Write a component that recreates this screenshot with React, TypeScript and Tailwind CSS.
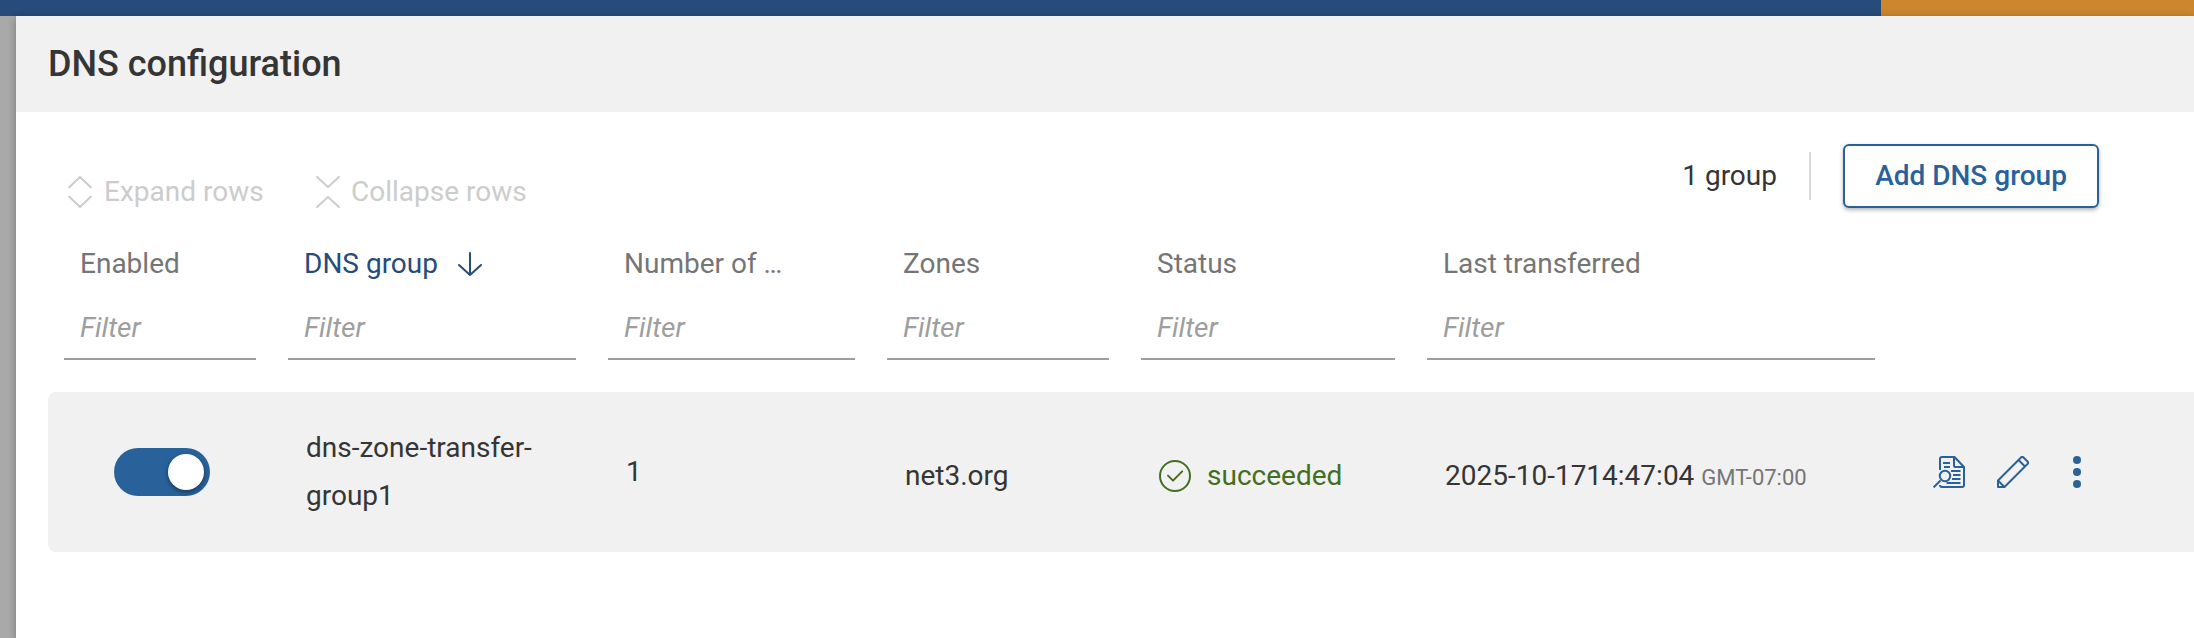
import React from "react";

type Column = { label: string; className: string; sorted?: boolean };

const columns: Column[] = [
  { label: "Enabled", className: "w-48" },
  { label: "DNS group", className: "w-72", sorted: true },
  { label: "Number of …", className: "w-[247px]" },
  { label: "Zones", className: "w-[222px]" },
  { label: "Status", className: "w-[254px]" },
  { label: "Last transferred", className: "w-[448px]" },
];

function ExpandIcon() {
  return (
    <svg className="h-8 w-6" viewBox="0 0 24 32" fill="none" stroke="currentColor" strokeWidth="2" strokeLinecap="round" strokeLinejoin="round">
      <path d="M1 11.500 12 1l11 10.500M1 20.500 12 31l11-10.500" />
    </svg>
  );
}

function CollapseIcon() {
  return (
    <svg className="h-8 w-6" viewBox="0 0 24 32" fill="none" stroke="currentColor" strokeWidth="2" strokeLinecap="round" strokeLinejoin="round">
      <path d="M1 1l11 10L23 1M1 31l11-10 11 10" />
    </svg>
  );
}

function SortArrow() {
  return (
    <svg className="h-6 w-6" viewBox="0 0 24 24" fill="none" stroke="currentColor" strokeWidth="2" strokeLinecap="round" strokeLinejoin="round">
      <path d="M12 1v22M1 13l11 10 11-10" />
    </svg>
  );
}

function CheckIcon() {
  return (
    <svg className="h-8 w-8" viewBox="0 0 32 32" fill="none" stroke="currentColor" strokeWidth="2" strokeLinecap="round" strokeLinejoin="round">
      <circle cx="16" cy="16" r="15" />
      <path d="m9 15.6 5 5 9.2-9.2" />
    </svg>
  );
}

function ReportIcon() {
  return (
    <svg className="h-8 w-8" viewBox="0 0 32 32" fill="none" stroke="currentColor" strokeWidth="2" strokeLinejoin="round">
      <path d="M7 14V3a2 2 0 0 1 2-2h12.500L31 11v18a2 2 0 0 1-2 2H9a2 2 0 0 1-2-2" />
      <path d="M21 1v8.500a1.500 1.500 0 0 0 1.500 1.500H31" />
      <path d="M10 7h7M11 11h6M18 15h9.500M20 19h7.500M19 23h8.500M13.500 27h14" />
      <circle cx="12" cy="20" r="5.200" />
      <path d="M7.500 24.500.600 31.400" />
    </svg>
  );
}

function PencilIcon() {
  return (
    <svg className="h-8 w-8" viewBox="0 0 32 32" fill="none" stroke="currentColor" strokeWidth="2" strokeLinejoin="round">
      <path d="M1 31v-6.500L24 1.500a1.800 1.800 0 0 1 2.500 0l4 4a1.800 1.800 0 0 1 0 2.500L7.500 31Z" />
      <path d="m21.500 4 6.500 6.500M1 24.500 7.500 31" />
    </svg>
  );
}

function MoreIcon() {
  return (
    <svg className="h-8 w-2" viewBox="0 0 8 32" fill="currentColor">
      <circle cx="4" cy="4" r="4" />
      <circle cx="4" cy="16" r="4" />
      <circle cx="4" cy="28" r="4" />
    </svg>
  );
}

export default function App() {
  return (
    <div className="flex h-[638px] w-[2194px] flex-col overflow-hidden bg-[#a9a9a9] font-['Roboto',sans-serif] text-[28px] leading-[48px] text-[#353535]">
      <div className="flex h-4 shrink-0">
        <div className="w-[1881px] bg-[#274b7a]" />
        <div className="flex-1 bg-[#cc862e]" />
      </div>
      <div className="flex flex-1 pl-4">
        <main className="flex flex-1 flex-col bg-white shadow-[0_2px_8px_rgba(0,0,0,0.3)]">
          <header className="flex h-24 items-center bg-[#f1f1f1] pl-8">
            <h1 className="text-[36px] font-medium">DNS configuration</h1>
          </header>

          <div className="flex h-32 items-start justify-between pl-[52px] pr-[95px] pt-8">
            <div className="flex pt-6 text-[#cccccc]">
              <button className="flex w-[248px] items-center gap-3">
                <ExpandIcon />
                <span className="whitespace-nowrap">Expand rows</span>
              </button>
              <button className="flex items-center gap-[11px]">
                <CollapseIcon />
                <span className="whitespace-nowrap">Collapse rows</span>
              </button>
            </div>
            <div className="flex items-center">
              <span>1 group</span>
              <div className="ml-8 mr-8 h-12 w-0.5 bg-[#d8d8d8]" />
              <button className="flex h-16 w-64 items-center justify-center rounded-md border-2 border-[#29629b] bg-white font-medium text-[#29629b] shadow-[0_2px_4px_rgba(0,0,0,0.3)]">
                Add DNS group
              </button>
            </div>
          </div>

          <div className="flex gap-8 pl-12">
            {columns.map((c) => (
              <div key={c.label} className={c.className}>
                <div className={c.sorted ? "flex items-center gap-5 pl-4 text-[#274b7a]" : "flex items-center pl-4 text-[#757575]"}>
                  <span>{c.label}</span>
                  {c.sorted && <SortArrow />}
                </div>
                <div className="h-[72px] border-b-2 border-[#9e9e9e] pl-4 pt-4 italic text-[#9e9e9e]">Filter</div>
              </div>
            ))}
          </div>

          <div className="ml-8 mt-8 flex h-40 items-center rounded-l-lg bg-[#f1f1f1]">
            <div className="flex w-[258px] pl-[66px]">
              <div className="flex h-12 w-24 items-center justify-end rounded-full bg-[#29629b] pr-1.5">
                <div className="h-9 w-9 rounded-full bg-white shadow-[0_2px_5px_rgba(0,0,0,0.45)]" />
              </div>
            </div>
            <div className="w-80">
              dns-zone-transfer-
              <br />
              group1
            </div>
            <div className="w-[279px]">1</div>
            <div className="w-[254px] pt-2">net3.org</div>
            <div className="flex w-[286px] items-center gap-4 pt-2 text-[#436e20]">
              <CheckIcon />
              <span>succeeded</span>
            </div>
            <div className="w-[488px] pt-2">
              2025-10-1714:47:04 <span className="text-[22px] leading-none text-[#757575]">GMT-07:00</span>
            </div>
            <div className="flex items-center text-[#29629b]">
              <ReportIcon />
              <span className="ml-8">
                <PencilIcon />
              </span>
              <span className="ml-11">
                <MoreIcon />
              </span>
            </div>
          </div>
        </main>
      </div>
    </div>
  );
}
